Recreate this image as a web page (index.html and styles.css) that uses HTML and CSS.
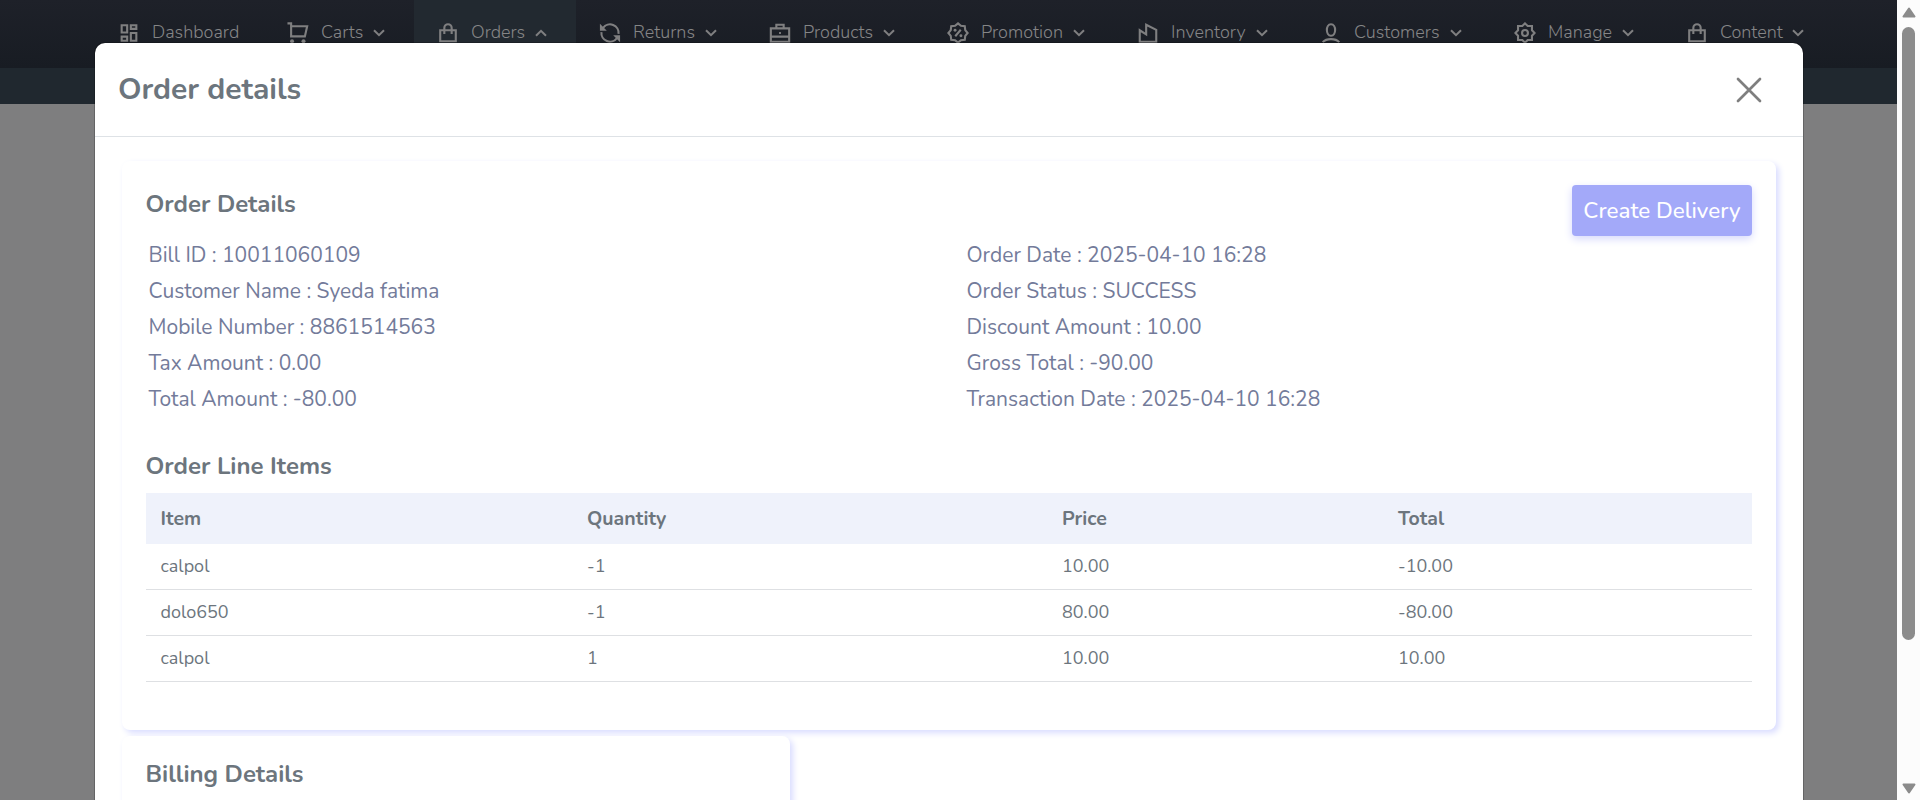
FILE: index.html
```html
<!DOCTYPE html>
<html lang="en">
<head>
<meta charset="utf-8">
<title>Order details</title>
<link rel="stylesheet" href="styles.css">
</head>
<body>
<svg class="defs" width="0" height="0">
  <symbol id="down" viewBox="0 0 12 8"><path d="M1 1.200l5 5 5-5"/></symbol>
  <symbol id="up" viewBox="0 0 12 8"><path d="M1 6.800l5-5 5 5"/></symbol>
  <symbol id="bag" viewBox="0 0 24 24"><path d="M3.500 9h17v12h-17zM8 13V6.500a4 4 0 0 1 8 0V13"/></symbol>
</svg>
<div class="page">
  <nav class="nav">
    <a class="item dash"><svg class="icon" viewBox="0 0 24 24"><path d="M4 3.500h6v8H4zM14 3.500h6v4h-6zM14 12h6v8.500h-6zM4 16h6v4.500H4z"/></svg><span>Dashboard</span></a>
    <a class="item carts"><svg class="icon" viewBox="0 0 24 24"><path d="M.5 1.500H4.500v14.200h15L22 4.700H5"/><circle class="dot" cx="5.500" cy="21" r="2.200"/><circle class="dot" cx="18" cy="21" r="2.200"/></svg><span>Carts</span><svg class="chev"><use href="#down"/></svg></a>
    <a class="item orders"><svg class="icon"><use href="#bag"/></svg><span>Orders</span><svg class="chev"><use href="#up"/></svg></a>
    <a class="item returns"><svg class="icon" viewBox="0 0 24 24"><path d="M4.500 6.500A9.300 9.300 0 0 1 21.300 13M2.700 11a9.300 9.300 0 0 0 16.800 6.500"/><path class="dot" d="M1 2v7.500h7.500zM23 22v-7.500h-7.500z"/></svg><span>Returns</span><svg class="chev"><use href="#down"/></svg></a>
    <a class="item products"><svg class="icon" viewBox="0 0 24 24"><path d="M2 7h20v14.500H2zM8 6.500V3h8v3.500M2 16h20M11 12h2"/></svg><span>Products</span><svg class="chev"><use href="#down"/></svg></a>
    <a class="item promotion"><svg class="icon" viewBox="0 0 24 24"><path d="M12 1.500l3.200 2.600 4.200.5.500 4.200 2.600 3.200-2.600 3.200-.5 4.200-4.200.5-3.200 2.600-3.200-2.600-4.200-.5-.5-4.200L1.500 12l2.600-3.200.5-4.200 4.200-.5zM9 15.500l6-7"/><circle class="dot" cx="8.800" cy="9" r="1.600"/><circle class="dot" cx="15.200" cy="15" r="1.600"/></svg><span>Promotion</span><svg class="chev"><use href="#down"/></svg></a>
    <a class="item inventory"><svg class="icon" viewBox="0 0 24 24"><path d="M3 21.500V9l7 4.500V3l11 5.500v13z"/></svg><span>Inventory</span><svg class="chev"><use href="#down"/></svg></a>
    <a class="item customers"><svg class="icon" viewBox="0 0 24 24"><path d="M12 2.500c6 0 6 12.500 0 12.500S6 2.500 12 2.500zM3 22c4-4.500 14-4.500 18 0"/></svg><span>Customers</span><svg class="chev"><use href="#down"/></svg></a>
    <a class="item manage"><svg class="icon" viewBox="0 0 24 24"><path d="M12 1.500l2.900 2.900h4.700v4.700l2.900 2.900-2.900 2.900v4.700h-4.700L12 22.500l-2.900-2.900H4.400v-4.700L1.500 12l2.900-2.900V4.400h4.700z"/><circle cx="12" cy="12" r="3.200"/></svg><span>Manage</span><svg class="chev"><use href="#down"/></svg></a>
    <a class="item content"><svg class="icon"><use href="#bag"/></svg><span>Content</span><svg class="chev"><use href="#down"/></svg></a>
  </nav>
  <div class="subnav"></div>
</div>

<section class="modal">
  <header class="modal-head">
    <h1>Order details</h1>
    <svg class="close" viewBox="0 0 26 26"><path d="M2 2l22 22M24 2L2 24"/></svg>
  </header>
  <div class="modal-body">
    <div class="card">
      <div class="card-head">
        <h2>Order Details</h2>
        <button class="create">Create Delivery</button>
      </div>
      <div class="details">
        <div>
          <p>Bill ID : 10011060109</p>
          <p>Customer Name : Syeda fatima</p>
          <p>Mobile Number : 8861514563</p>
          <p>Tax Amount : 0.00</p>
          <p>Total Amount : -80.00</p>
        </div>
        <div>
          <p>Order Date : 2025-04-10 16:28</p>
          <p>Order Status : SUCCESS</p>
          <p>Discount Amount : 10.00</p>
          <p>Gross Total : -90.00</p>
          <p>Transaction Date : 2025-04-10 16:28</p>
        </div>
      </div>
      <h2 class="t-lines">Order Line Items</h2>
      <table class="lines">
        <colgroup><col class="c1"><col class="c2"><col class="c3"><col></colgroup>
        <thead><tr><th>Item</th><th>Quantity</th><th>Price</th><th>Total</th></tr></thead>
        <tbody>
          <tr><td>calpol</td><td>-1</td><td>10.00</td><td>-10.00</td></tr>
          <tr><td>dolo650</td><td>-1</td><td>80.00</td><td>-80.00</td></tr>
          <tr><td>calpol</td><td>1</td><td>10.00</td><td>10.00</td></tr>
        </tbody>
      </table>
    </div>
    <div class="card billing"><h2>Billing Details</h2></div>
  </div>
</section>

<div class="scrollbar">
  <svg class="arrow" viewBox="0 0 14 11"><path d="M7 1.500L12.500 9.500h-11z"/></svg>
  <div class="thumb"></div>
  <svg class="arrow" viewBox="0 0 14 11"><path d="M7 9.500L12.500 1.500h-11z"/></svg>
</div>
</body>
</html>
```
FILE: styles.css
```css
* { box-sizing: border-box; }
html { height: 800px; overflow: hidden; }
body {
  margin: 0;
  height: 800px;
  overflow: hidden;
  position: relative;
  font-family: Nunito, Lato, "Open Sans", sans-serif;
  color: #6c757d;
  background: #7e7e7f;
}
.defs { position: absolute; }
h1, h2, p { margin: 0; }

.nav {
  display: flex;
  height: 68px;
  padding-left: 95px;
  background: linear-gradient(#1e2129, #181c23);
}
.item {
  display: flex;
  flex: none;
  align-items: center;
  height: 65px;
  padding: 0 29px 0 23px;
  color: #858586;
  font-size: 18px;
  font-weight: 300;
  line-height: 24px;
}
.item span { margin: -1px 0 0 12px; white-space: nowrap; }
.icon, .chev { fill: none; stroke: #7f7f80; stroke-width: 2.3; flex: none; }
.icon { width: 22px; height: 22px; }
.icon .dot { fill: #7f7f80; stroke: none; }
.chev { width: 12px; height: 8px; margin-left: auto; stroke-width: 2; }
.dash { width: 169px; }
.carts { width: 150px; }
.orders { width: 162px; height: 68px; padding-bottom: 3px; background: #222930; }
.returns { width: 170px; }
.products { width: 178px; }
.promotion { width: 190px; }
.inventory { width: 183px; }
.customers { width: 194px; }
.manage { width: 172px; }
.content { width: 170px; }
.subnav { height: 36px; background: #20282f; }

.modal {
  position: absolute;
  left: 94px;
  top: 42px;
  width: 1710px;
  height: 758px;
  overflow: hidden;
  background: #fff;
  background-clip: padding-box;
  border: 1px solid rgba(0, 0, 0, .2);
  border-bottom: 0;
  border-radius: 11px 11px 0 0;
}
.modal-head {
  display: flex;
  justify-content: space-between;
  align-items: center;
  height: 94px;
  padding: 0 41px 0 23px;
  border-bottom: 1px solid #dee2e6;
}
.modal-head h1 { font-size: 30px; line-height: 38px; font-weight: 700; }
.close { width: 26px; height: 26px; fill: none; stroke: #7f7f7f; stroke-width: 2.7; stroke-linecap: round; }
.modal-body { padding: 24px 27px 0; }

.card {
  height: 569px;
  padding: 24px;
  background: #fff;
  border-radius: 8px;
  box-shadow: 3px 3px 6px #d9dcff;
}
.card h2 { margin-left: -0.5px; font-size: 24px; line-height: 38px; font-weight: 700; }
.card-head { display: flex; justify-content: space-between; align-items: flex-start; height: 51px; }
.create {
  width: 180px;
  height: 51px;
  padding: 0;
  border: 0;
  border-radius: 4px;
  background: #a3a9f9;
  box-shadow: 0 3px 8px #d6d9fc;
  color: #fff;
  font: 500 22.4px/50px Nunito, Lato, sans-serif;
}
.details {
  display: grid;
  grid-template-columns: 818px 1fr;
  padding: 1px 0 0 2.5px;
  color: #737b9a;
  font-size: 21px;
  line-height: 36px;
}
.card .t-lines { margin-top: 30px; }
.lines { width: 1606px; margin-top: 8px; border-collapse: separate; border-spacing: 0; table-layout: fixed; }
.c1 { width: 427px; }
.c2 { width: 475px; }
.c3 { width: 336px; }
.lines th, .lines td { padding: 0 14px; text-align: left; }
.lines th:first-child, .lines td:first-child { padding-left: 14.5px; }
.lines th { height: 51px; background: #eff2fb; font-size: 19.5px; font-weight: 700; }
.lines td { height: 46px; padding-bottom: 1px; font-size: 18px; border-bottom: 1px solid #dee0e3; }
.billing { width: 668px; height: 220px; margin-top: 6px; padding-top: 19px; }

.scrollbar {
  position: absolute;
  top: 0;
  right: 0;
  display: flex;
  flex-direction: column;
  align-items: center;
  width: 23px;
  height: 800px;
  padding: 7px 0 6px;
  background: #fcfcfc;
}
.thumb { width: 13px; height: 613px; margin: 9px 0 auto; border-radius: 7px; background: #8b8b8b; }
.arrow { width: 14px; height: 11px; fill: #8b8b8b; stroke: #8b8b8b; stroke-width: 2; stroke-linejoin: round; }
```
